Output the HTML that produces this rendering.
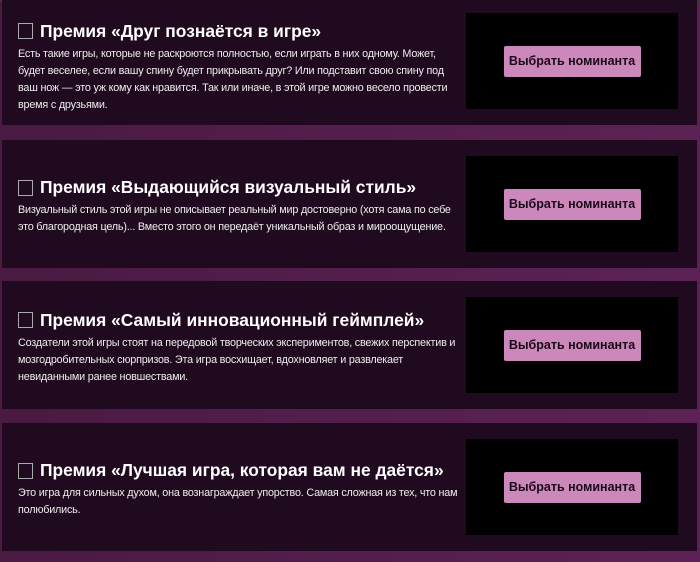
<!DOCTYPE html>
<html><head><meta charset="utf-8"><style>
html,body{margin:0;padding:0}
body{width:700px;height:562px;overflow:hidden;position:relative;background:linear-gradient(90deg,#4a1a42,#5c2255);font-family:"Liberation Sans",sans-serif;border-top:2px solid #3a3a3a;box-sizing:border-box}
.p{position:absolute;left:2px;width:695px;height:128px;background:#200a1f;}
.c{position:absolute;left:16px;width:446px;top:5px;bottom:0;display:flex;flex-direction:column;justify-content:center;color:#eee}
h2{margin:0 0 4px;font-size:17.4px;font-weight:bold;color:#fff;display:flex;align-items:center;letter-spacing:0px;white-space:nowrap}
h2 i{display:inline-block;width:15px;height:16px;border:1.5px solid #aaa;margin-right:7px;box-sizing:border-box}
p{margin:0;font-size:10.8px;line-height:17px;letter-spacing:-0.2px;white-space:nowrap}
.b{position:absolute;left:464px;top:16px;width:212px;height:96px;background:#000;display:flex;align-items:center;justify-content:center}
.b span{background:#cc88bb;color:#1a0a18;font-weight:bold;font-size:12.5px;width:137px;height:31px;display:flex;align-items:center;justify-content:center;border-radius:2px}
</style></head><body>
<div class="p" style="top:-5px"><div class="c" style="top:12px"><h2><i></i>Премия «Друг познаётся в игре»</h2><p>Есть такие игры, которые не раскроются полностью, если играть в них одному. Может,<br>будет веселее, если вашу спину будет прикрывать друг? Или подставит свою спину под<br>ваш нож — это уж кому как нравится. Так или иначе, в этой игре можно весело провести<br>время с друзьями.</p></div><div class="b"><span>Выбрать номинанта</span></div></div>
<div class="p" style="top:138px"><div class="c"><h2><i></i>Премия «Выдающийся визуальный стиль»</h2><p>Визуальный стиль этой игры не описывает реальный мир достоверно (хотя сама по себе<br>это благородная цель)... Вместо этого он передаёт уникальный образ и мироощущение.</p></div><div class="b"><span>Выбрать номинанта</span></div></div>
<div class="p" style="top:279px"><div class="c"><h2><i></i>Премия «Самый инновационный геймплей»</h2><p>Создатели этой игры стоят на передовой творческих экспериментов, свежих перспектив и<br>мозгодробительных сюрпризов. Эта игра восхищает, вдохновляет и развлекает<br>невиданными ранее новшествами.</p></div><div class="b"><span>Выбрать номинанта</span></div></div>
<div class="p" style="top:421px"><div class="c"><h2><i></i>Премия «Лучшая игра, которая вам не даётся»</h2><p>Это игра для сильных духом, она вознаграждает упорство. Самая сложная из тех, что нам<br>полюбились.</p></div><div class="b"><span>Выбрать номинанта</span></div></div>
</body></html>
